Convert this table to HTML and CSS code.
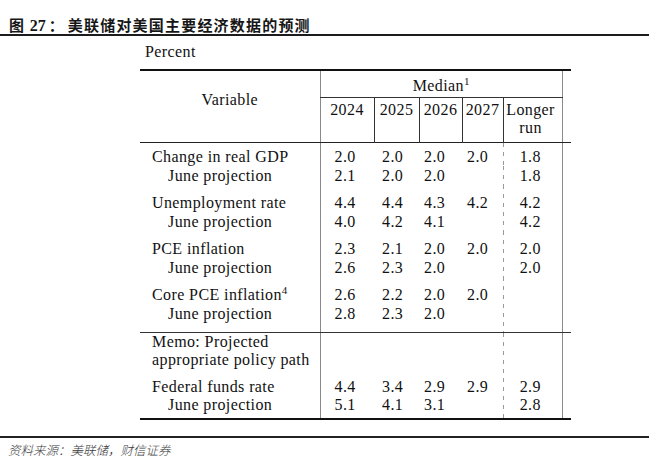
FILE: index.html
```html
<!DOCTYPE html>
<html lang="zh">
<head>
<meta charset="utf-8">
<title>图 27</title>
<link rel="stylesheet" href="styles.css">
</head>
<body>
<div class="page">
  <div class="title"><span>图</span> <span class="num">27</span><span class="colon">：</span>美联储对美国主要经济数据的预测</div>
  <div class="wrap">
    <div class="percent">Percent</div>
    <table class="proj">
      <colgroup>
        <col class="c-var"><col class="c-y1"><col class="c-y2"><col class="c-y3"><col class="c-y4"><col class="c-lr"><col class="c-pad">
      </colgroup>
      <thead>
        <tr>
          <th rowspan="2" class="h-var">Variable</th>
          <th colspan="5" class="h-med">Median<sup>1</sup></th>
          <th rowspan="2" class="h-pad"></th>
        </tr>
        <tr class="h-row2">
          <th class="h-y">2024</th>
          <th class="h-y">2025</th>
          <th class="h-y">2026</th>
          <th class="h-y">2027</th>
          <th class="h-lr">Longer<br>run</th>
        </tr>
      </thead>
      <tbody class="main">
        <tr class="first"><td class="lab">Change in real GDP</td><td>2.0</td><td>2.0</td><td>2.0</td><td>2.0</td><td class="lr">1.8</td><td></td></tr>
        <tr><td class="lab sub">June projection</td><td>2.1</td><td>2.0</td><td>2.0</td><td></td><td class="lr">1.8</td><td></td></tr>
        <tr class="g"><td class="lab">Unemployment rate</td><td>4.4</td><td>4.4</td><td>4.3</td><td>4.2</td><td class="lr">4.2</td><td></td></tr>
        <tr><td class="lab sub">June projection</td><td>4.0</td><td>4.2</td><td>4.1</td><td></td><td class="lr">4.2</td><td></td></tr>
        <tr class="g"><td class="lab">PCE inflation</td><td>2.3</td><td>2.1</td><td>2.0</td><td>2.0</td><td class="lr">2.0</td><td></td></tr>
        <tr><td class="lab sub">June projection</td><td>2.6</td><td>2.3</td><td>2.0</td><td></td><td class="lr">2.0</td><td></td></tr>
        <tr class="g"><td class="lab">Core PCE inflation<sup>4</sup></td><td>2.6</td><td>2.2</td><td>2.0</td><td>2.0</td><td class="lr"></td><td></td></tr>
        <tr class="last"><td class="lab sub">June projection</td><td>2.8</td><td>2.3</td><td>2.0</td><td></td><td class="lr"></td><td></td></tr>
      </tbody>
      <tbody class="memo">
        <tr><td class="lab">Memo: Projected<br>appropriate policy path</td><td></td><td></td><td></td><td></td><td class="lr"></td><td></td></tr>
        <tr class="g2"><td class="lab">Federal funds rate</td><td>4.4</td><td>3.4</td><td>2.9</td><td>2.9</td><td class="lr">2.9</td><td></td></tr>
        <tr class="last2"><td class="lab sub">June projection</td><td>5.1</td><td>4.1</td><td>3.1</td><td></td><td class="lr">2.8</td><td></td></tr>
      </tbody>
    </table>
  </div>
  <div class="source">资料来源：美联储，财信证券</div>
</div>
</body>
</html>
```

FILE: styles.css
```css
html, body {
  margin: 0;
  padding: 0;
  background: #ffffff;
}

.page {
  width: 649px;
  color: #111111;
}

.title {
  height: 19px;
  padding: 15px 0 0 9px;
  line-height: 19px;
  font-family: "Noto Sans CJK SC", sans-serif;
  font-weight: 700;
  font-size: 15px;
  letter-spacing: 1.2px;
  color: #161616;
  border-bottom: 2px solid #1c1c1c;
}

.title .num {
  font-family: "Liberation Serif", serif;
  font-weight: 700;
  font-size: 16px;
  letter-spacing: 0;
}

.title .colon {
  display: inline-block;
  width: 19px;
  padding-left: 3px;
}

.wrap {
  margin-left: 140px;
  width: 431px;
}

.percent {
  font-family: "Liberation Serif", serif;
  font-size: 16px;
  line-height: 19px;
  padding: 6px 0 0 5px;
  margin-bottom: 8px;
  letter-spacing: 0.4px;
}

.proj {
  width: 431px;
  table-layout: fixed;
  border-collapse: collapse;
  font-family: "Liberation Serif", serif;
  font-size: 16px;
  line-height: 19px;
  letter-spacing: 0.4px;
  border-top: 2px solid #111111;
  border-bottom: 2px solid #111111;
}

.c-var { width: 180px; border-right: 1px solid #8a8a8a; }
.c-y1 { width: 54px; }
.c-y2 { width: 45px; }
.c-y3 { width: 43px; }
.c-y4 { width: 41px; }
.c-lr { width: 59px; border-right: 1px solid #8a8a8a; }
.c-pad { width: 9px; }

.proj th {
  font-weight: normal;
  padding: 0;
}

.proj thead {
  border-bottom: 1px solid #222222;
}

.h-var {
  text-align: center;
  vertical-align: top;
  padding-top: 19px !important;
}

.h-med {
  text-align: center;
  padding: 5px 0 2px !important;
  border-bottom: 1px solid #333333;
}

.proj sup {
  font-size: 11px;
  line-height: 0;
  vertical-align: 6px;
  letter-spacing: 0;
}

.h-row2 th {
  line-height: 18px;
  padding: 3px 0 5px;
  vertical-align: top;
  text-align: center;
}

.h-y {
  border-right: 1px solid #333333;
}

.proj td {
  padding: 0;
  text-align: left;
  vertical-align: top;
  white-space: nowrap;
}

.proj td:nth-child(2) { padding-left: 14px; }
.proj td:nth-child(3) { padding-left: 8px; }
.proj td:nth-child(4) { padding-left: 5px; }
.proj td:nth-child(5) { padding-left: 5px; }

.proj td.lab {
  padding-left: 12px;
}

.proj td.sub {
  padding-left: 28px;
}

.proj td.lr,
.proj th.h-lr {
  text-align: center;
  padding-right: 4px;
}

.proj td.lr {
  background-image: repeating-linear-gradient(to bottom, #9a9a9a 0, #9a9a9a 4px, transparent 4px, transparent 9px);
  background-size: 1px 100%;
  background-repeat: no-repeat;
  background-position: left top;
}

.main tr.first td { padding-top: 4px; }
.main tr.g td { padding-top: 8px; }
.main tr.last td { padding-bottom: 9px; }

.memo {
  border-top: 1px solid #333333;
  line-height: 18px;
}

.memo td { line-height: 18px; }
.memo tr.g2 td { padding-top: 9px; }
.memo tr.last2 td { padding-bottom: 4px; }

.source {
  margin-top: 16px;
  border-top: 2px solid #222222;
  padding: 4px 0 0 8px;
  font-family: "Noto Sans CJK SC", sans-serif;
  font-style: italic;
  font-weight: 300;
  font-size: 12.5px;
  line-height: 16px;
  color: #3a3a3a;
}
```
